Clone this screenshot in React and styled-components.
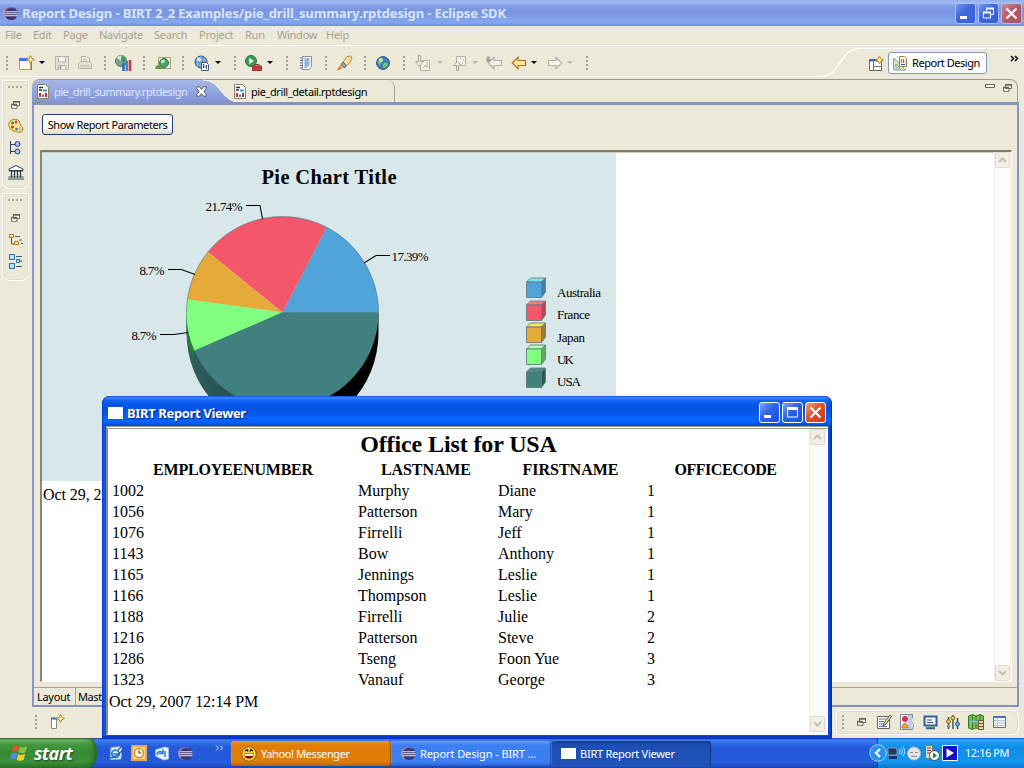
import React from 'react';
import styled, { createGlobalStyle, css } from 'styled-components';

const GlobalStyle = createGlobalStyle`
  * { box-sizing: border-box; }
  body { margin: 0; overflow: hidden; }
  svg { display: block; flex: none; overflow: visible; }
`;

const uiFont = css`
  font-family: 'Noto Sans', 'Liberation Sans', sans-serif;
  font-size: 11px;
  line-height: 14px;
  white-space: nowrap;
`;
const serif = css`
  font-family: 'Liberation Serif', serif;
  white-space: nowrap;
`;

/* ---------- shared parts ---------- */

const Label = styled.span`
  ${uiFont}
  flex: none;
  color: ${p => p.$color || '#000'};
  letter-spacing: ${p => p.$ls || 0}px;
`;

const Desktop = styled.div`
  position: relative;
  width: 1024px;
  height: 768px;
  display: flex;
  flex-direction: column;
  background: #ece9d8;
  overflow: hidden;
`;

const WinButton = styled.div`
  width: 21px;
  height: 21px;
  flex: none;
  border-radius: 3px;
  border: 1px solid ${p => (p.$faded ? '#a9c0f3' : '#fff')};
  background: ${p =>
    p.$close
      ? p.$faded
        ? 'linear-gradient(135deg,#c98a9a,#b05a68 50%,#a9545f)'
        : 'linear-gradient(135deg,#f0a288,#e0532c 45%,#c43a10)'
      : p.$faded
        ? 'linear-gradient(135deg,#6f97ee,#3d66dc 45%,#3a5fd8)'
        : 'linear-gradient(135deg,#7fa3f2,#2f62e4 45%,#1c4fd8)'};
`;

/* ---------- title bar ---------- */

const TitleBar = styled.div`
  height: 26px;
  flex: none;
  display: flex;
  align-items: center;
  padding: 0 2px 0 3px;
  background: linear-gradient(#8fabee 0, #a2bdf4 2px, #86a4ea 5px, #7c96e0 9px, #7b97e2 14px, #82a4ec 20px, #82a6ee 23px, #7288d4 26px);
`;
const TitleText = styled.div`
  font: bold 13px/16px 'Noto Sans', sans-serif;
  white-space: nowrap;
  flex: 1;
  padding-left: ${p => p.$pad}px;
  color: ${p => (p.$faded ? '#d8e4f8' : '#fff')};
  letter-spacing: ${p => p.$ls}px;
  text-shadow: ${p => (p.$faded ? 'none' : '1px 1px 1px #0a1f80')};
`;
const WinButtons = styled.div`
  display: flex;
  gap: 2px;
`;

/* ---------- menu ---------- */

const MenuBar = styled.div`
  height: 20px;
  flex: none;
  display: flex;
  align-items: center;
  padding: 0 0 1px 5px;
  border-bottom: 1px solid #fff;
`;
const MenuItem = styled.div`
  ${uiFont}
  width: ${p => p.$w}px;
  color: #a5a291;
  letter-spacing: -0.25px;
`;

/* ---------- toolbar ---------- */

const Toolbar = styled.div`
  height: 33px;
  flex: none;
  display: flex;
`;
const ToolStrip = styled.div`
  width: 820px;
  height: 31px;
  display: flex;
  align-items: center;
  padding: 3px 0 0 6px;
  border-bottom: 1px solid #fbfaf5;
`;
const Slot = styled.div`
  width: ${p => p.$w}px;
  flex: none;
  display: flex;
  align-items: center;
`;
const Handle = styled.div`
  width: 2px;
  height: 14px;
  background: repeating-linear-gradient(#a19e8e 0 2px, transparent 2px 4px);
`;
const Caret = styled.div`
  border: 3px solid transparent;
  border-top-color: ${p => (p.$off ? '#bcb9aa' : '#000')};
  border-bottom: 0;
`;
const PerspectiveBar = styled.div`
  flex: 1;
  display: flex;
`;
const PerspectiveButtons = styled.div`
  flex: 1;
  display: flex;
  align-items: flex-start;
  border-top: 1px solid #fff;
  height: 30px;
  margin-top: 2px;
  padding: 3px 0 0 9px;
`;
const PerspectiveButton = styled.div`
  width: 99px;
  height: 22px;
  margin-left: 3px;
  margin-right: 23px;
  display: flex;
  align-items: center;
  gap: 4px;
  padding-left: 4px;
  border: 1px solid #8098bd;
  border-radius: 3px;
  background: #fdfdff;
`;
const OpenPerspective = styled.div`
  padding-top: 4px;
`;
const Overflow = styled.div`
  padding-top: 3px;
`;

/* ---------- workbench ---------- */

const Workbench = styled.div`
  height: 628px;
  flex: none;
  display: flex;
`;
const FastViews = styled.div`
  width: 32px;
  flex: none;
  display: flex;
  flex-direction: column;
  gap: 4px;
  padding: 1px 0 0 2px;
`;
const FastViewBar = styled.div`
  width: 27px;
  height: ${p => p.$h}px;
  border: 1px solid #fff;
  border-right-color: #fbfaf5;
  border-radius: 2px 2px 8px 8px;
  box-shadow: 0 0 0 1px #dedac8 inset;
  display: flex;
  flex-direction: column;
  align-items: center;
`;
const FastItem = styled.div`
  height: ${p => p.$h}px;
  flex: none;
  display: flex;
  align-items: center;
`;
const Dots = styled.div`
  width: 15px;
  height: 2px;
  background: repeating-linear-gradient(90deg, #a9a696 0 2px, transparent 2px 4px);
`;
const EditorFolder = styled.div`
  width: 987px;
  flex: none;
  display: flex;
  flex-direction: column;
`;
const TabStrip = styled.div`
  height: 23px;
  width: 986px;
  flex: none;
  display: flex;
  border-top: 1px solid #9c998a;
  border-right: 1px solid #a5a294;
  border-radius: 8px 8px 0 0;
`;
const ActiveTab = styled.div`
  width: 202px;
  height: 23px;
  display: grid;
  & > * { grid-area: 1 / 1; }
`;
const TabContent = styled.div`
  position: relative;
  display: flex;
  align-items: center;
  padding-left: ${p => p.$pad}px;
  gap: 5px;
  height: 23px;
`;
const TabClose = styled.div`
  padding-left: 4px;
`;
const IdleTab = styled.div`
  width: 161px;
  height: 22px;
  border-right: 1px solid #a5a294;
  border-top-right-radius: 8px;
`;
const TabTools = styled.div`
  flex: 1;
  display: flex;
  justify-content: flex-end;
  gap: 8px;
  padding: 4px 5px 0 0;
`;
const EditorBody = styled.div`
  flex: 1;
  border: 2px solid #8695cb;
  border-top: 3px solid #8893c0;
  border-bottom-color: #8490b8;
  display: flex;
  flex-direction: column;
  background: #ece9d8;
`;
const ParamRow = styled.div`
  height: 45px;
  flex: none;
  padding: 9px 0 0 8px;
`;
const PushButton = styled.div`
  width: 131px;
  height: 21px;
  display: flex;
  align-items: center;
  justify-content: center;
  border: 1px solid #1d3f74;
  border-radius: 3px;
  background: linear-gradient(#fff, #f6f5ef 70%, #dcd8ca);
`;
const BrowserFrame = styled.div`
  width: 972px;
  height: 532px;
  margin-left: 6px;
  flex: none;
  display: flex;
  border: 1px solid #8d8a7b;
  border-top: 2px solid #7b796c;
  border-left: 2px solid #8a8779;
  border-right-color: #fff;
  border-bottom-color: #fff;
  background: #fff;
`;
const ReportPage = styled.div`
  flex: 1;
  border-top: 1px solid #cfcdc2;
`;
const ReportDate = styled.div`
  ${serif}
  font-size: 16px;
  line-height: 20px;
  padding: ${p => p.$pad};
  letter-spacing: -0.07px;
`;
const ScrollBar = styled.div`
  width: 17px;
  display: flex;
  flex-direction: column;
  justify-content: space-between;
  background: #fdfdf9;
  border-left: 1px solid #efeee6;
  border-right: 1px solid #f3f1ea;
`;
const ScrollButton = styled.div`
  width: 15px;
  height: 16px;
  display: flex;
  align-items: center;
  justify-content: center;
  border: 1px solid #e0ded4;
  border-radius: 2px;
  background: #f1efe6;
`;
const PageTabs = styled.div`
  height: 18px;
  flex: none;
  margin-top: 5px;
  display: flex;
  border-top: 1px solid #a5a294;
`;
const PageTab = styled.div`
  height: 17px;
  display: flex;
  align-items: center;
  width: ${p => p.$w}px;
  padding-left: ${p => p.$pad}px;
  border-right: 1px solid #a5a294;
`;

/* ---------- status row ---------- */

const StatusRow = styled.div`
  height: 31px;
  flex: none;
  display: flex;
  align-items: center;
  padding: 0 5px 1px 35px;
`;
const NewFastView = styled.div`
  flex: 1;
  padding-left: 14px;
`;
const ViewShelf = styled.div`
  width: 183px;
  height: 25px;
  display: flex;
  align-items: center;
  padding-left: 5px;
  border: 1px solid #fff;
  border-radius: 3px 8px 8px 3px;
  box-shadow: 0 0 0 1px #dedac8 inset;
`;

/* ---------- report viewer window ---------- */

const ViewerWindow = styled.div`
  position: absolute;
  left: 102px;
  top: 396px;
  width: 730px;
  height: 343px;
  display: flex;
  flex-direction: column;
  padding: 0 4px 4px;
  border-radius: 8px 8px 0 0;
  background: linear-gradient(90deg, #0a2fc4 0, #0b5cf2 2px, #0a4fe0 4px, #0a4fe0 726px, #0844d8 728px, #001fa0 730px);
  box-shadow: inset 0 -3px 0 #0a38c4;
`;
const ViewerTitle = styled.div`
  height: 30px;
  flex: none;
  margin: 0 -4px;
  display: flex;
  align-items: center;
  padding: 3px 6px 0 6px;
  border-radius: 8px 8px 0 0;
  box-shadow: inset 2px 0 1px -1px #0a38c4, inset -2px 0 1px -1px #0a2cb0;
  background: linear-gradient(#0c50d8 0, #3a8cff 2px, #1468f4 4px, #0555e6 8px, #0453e2 14px, #0562fa 22px, #0664ff 26px, #0347d0 30px);
`;
const BlankIcon = styled.div`
  width: 15px;
  height: ${p => p.$h || 12}px;
  flex: none;
  background: #fff;
`;
const ViewerBody = styled.div`
  flex: 1;
  display: flex;
  border: 2px solid #8d8a7b;
  border-top: 3px double #a19e90;
  border-right: 1px solid #fff;
  border-bottom: 1px solid #fff;
  background: #fff;
  padding: 0 1px 2px 0;
`;
const ViewerPage = styled.div`
  flex: 1;
`;
const Heading = styled.div`
  ${serif}
  font-size: 24px;
  font-weight: bold;
  line-height: 28px;
  height: 30px;
  padding-top: 1px;
  letter-spacing: -0.12px;
  text-align: center;
`;
const Table = styled.div`
  ${serif}
  font-size: 16px;
  line-height: 21px;
  display: grid;
  grid-template-columns: 246px 140px 149px 161px;
  grid-auto-rows: 21px;
  padding-left: 2px;
`;
const Head = styled.div`
  font-weight: bold;
  text-align: center;
  letter-spacing: ${p => p.$ls}px;
`;
const Cell = styled.div`
  padding-left: 2px;
`;

/* ---------- taskbar ---------- */

const Taskbar = styled.div`
  height: 30px;
  flex: none;
  display: flex;
  background: linear-gradient(#1f3fb0 0, #3f80ee 2px, #3070e8 5px, #2459d8 9px, #245cdc 24px, #1f4fc4 28px, #1840a8 30px);
`;
const StartButton = styled.div`
  width: 97px;
  display: flex;
  align-items: center;
  gap: 5px;
  padding-left: 10px;
  border-radius: 0 8px 10px 0 / 0 12px 14px 0;
  background: linear-gradient(#2a6a2a 0, #6cb86a 2px, #44983f 6px, #378a34 14px, #3a9038 24px, #2a7228 30px);
  box-shadow: inset -4px 0 5px -2px #1f5f22;
`;
const StartText = styled.div`
  font: italic bold 18px/22px 'Open Sans', 'Noto Sans', sans-serif;
  letter-spacing: -0.65px;
  color: #fff;
  text-shadow: 1px 1px 2px #1c4a1c;
`;
const QuickLaunch = styled.div`
  width: 134px;
  display: flex;
  align-items: center;
  padding-left: 11px;
`;
const TaskButton = styled.div`
  width: 160px;
  height: 25px;
  margin: 3px 0 0 0;
  display: flex;
  align-items: center;
  gap: 4px;
  padding-left: 10px;
  border-radius: 3px;
  background: ${p =>
    p.$kind === 'alert'
      ? 'linear-gradient(#f09a3a,#e27d08 4px,#e07b06 21px,#b8640a)'
      : p.$kind === 'pressed'
        ? 'linear-gradient(#143c8c,#1d4eb4 4px,#1e52b8 23px,#2458c4)'
        : 'linear-gradient(#6aa0fa,#3c80f4 4px,#3a7ef2 21px,#2a60d0)'};
  box-shadow: inset 1px 0 1px rgba(255, 255, 255, 0.15), inset -1px 0 1px rgba(0, 0, 0, 0.3);
`;
const Spacer = styled.div`
  flex: 1;
`;
const Tray = styled.div`
  width: 147px;
  display: flex;
  align-items: center;
  border-left: 1px solid #0a3d9c;
  background: linear-gradient(#0c5cc4 0, #2cb0f8 2px, #159cf0 5px, #0f8ce6 10px, #1296ee 24px, #0d78cc 30px);
`;
const TrayArrow = styled.div`
  margin-left: -9px;
`;

/* ---------- icons ---------- */

const I = ({ w = 16, h = 16, children }) => (
  <svg width={w} height={h} viewBox={`0 0 ${w} ${h}`} fill="none">{children}</svg>
);
const Star = ({ x, y }) => (
  <path d={`M${x} ${y - 4}l1.2 2.8 2.8 1.2-2.8 1.2L${x} ${y + 4}l-1.2-2.8L${x - 4} ${y}l2.8-1.2z`} fill="#fff3b8" stroke="#b8861c" strokeWidth="1" />
);
const EclipseIcon = ({ s = 15 }) => (
  <svg width={s} height={s} viewBox="0 0 16 16">
    <circle cx="7" cy="8" r="6.8" fill="#d8a0a0" />
    <circle cx="8.6" cy="8" r="7" fill="#3a3478" />
    <path d="M2 6.2h13.3M1.6 8.3h14M2 10.4h13.3" stroke="#e8e6f6" strokeWidth="1.1" />
    <path d="M4 4c2-3 6-3 8-1" stroke="#8a84c0" fill="none" />
  </svg>
);
const NewIcon = () => (
  <I w={17}><path d="M1.5 4.5h11v10h-11z" fill="#fdfdf4" stroke="#b7a060" /><path d="M1 3h9v3H1z" fill="#3f7fc8" /><path d="M13.5 7v8" stroke="#a88420" /><Star x={12.5} y={4.5} /></I>
);
const SaveIcon = () => (
  <I><path d="M1.500 1.500h13v13h-13z" fill="#e4e1d4" stroke="#b7b4a8" /><path d="M4.500 2v5h7V2M4.500 14.500v-4h7v4" fill="#f4f2ea" stroke="#b7b4a8" /><path d="M6.500 11v3" stroke="#aaa79b" strokeWidth="2" /></I>
);
const PrintIcon = () => (
  <I><path d="M4.500 7.500v-6h5l3 2v4" fill="#f6f4ee" stroke="#b7b4a8" /><path d="M1.500 8.500l2-2h9l2 2v5h-13z" fill="#e4e1d4" stroke="#b7b4a8" /><path d="M6 4h4M6 6h4M3 11h10" stroke="#b7b4a8" /></I>
);
const ChartIcon = () => (
  <I w={17}><circle cx="6" cy="6" r="5.500" fill="#7fa28a" stroke="#58756a" /><path d="M6 6L1.500 2.500A6 6 0 0 1 7 .5z" fill="#cfe4d6" /><path d="M6.500 1a5.500 5.500 0 0 1 4 7L6 6z" fill="#3b9a6a" /><path d="M8.500 8v8" stroke="#2f6fb8" strokeWidth="2.600" /><path d="M11.800 6v10" stroke="#4a7fd0" strokeWidth="2.400" /><path d="M15 5v11" stroke="#c8343c" strokeWidth="2.600" /></I>
);
const ImageIcon = () => (
  <I><path d="M3.500 2.500h12v11h-12z" fill="#f0f4e4" stroke="#a9a26a" /><circle cx="9" cy="8" r="4.500" fill="#4aa070" stroke="#2f6f5c" /><path d="M6 6c2-2 4-1 4 0s-2 3-4 2" fill="#c8e8c0" /><path d="M0 13c1-3 4-4 6-2 2 1 3 1 4 3H1z" fill="#5d9a40" /></I>
);
const Globe = ({ s = 14 }) => (
  <svg width={s} height={s} viewBox="0 0 14 14"><circle cx="7" cy="7" r="6.400" fill="#3f7cba" stroke="#2d5578" /><path d="M3 3c2-2 4-1 4 1S5 6 4.500 8 2 8 1.500 6zM8 7c2-1 4 0 4 1s-2 4-4 4-1-4 0-5z" fill="#7cc070" /><circle cx="5" cy="4" r="1.800" fill="#e8f6ff" opacity=".8" /></svg>
);
const GlobeDocIcon = () => (
  <I><circle cx="7" cy="7" r="6" fill="#5c94c8" stroke="#35597c" /><path d="M2 5h10M2 9h10M7 1v12M4 2c-1 3-1 7 0 10M10 2c1 3 1 7 0 10" stroke="#a8cbe4" strokeWidth=".7" /><circle cx="5" cy="4.500" r="2" fill="#f0faff" opacity=".8" /><path d="M7.500 7.500h5l2 2v6h-7z" fill="#fff" stroke="#4a5a8c" /><path d="M9.500 9v5M12.500 10v4M9 11.500h4" stroke="#304a90" strokeWidth="1.300" strokeDasharray="1.500 1" /></I>
);
const RunIcon = () => (
  <I w={17}><circle cx="6" cy="6" r="5.500" fill="#3a9a54" stroke="#2a7040" /><path d="M4 3l5 3-5 3z" fill="#fff" /><path d="M7.500 11h9v4.500h-9z" fill="#d04040" stroke="#a03030" /><path d="M10 11V9.500h4V11M8 13h8" stroke="#a03030" /></I>
);
const DocIcon = () => (
  <I><path d="M4.500 1.500h9v10l-2 3h-7z" fill="#f4f8ff" stroke="#8a8f9c" /><path d="M6.500 4h5M6.500 6h5M6.500 8h5M6.500 10h5M6.500 12h3" stroke="#3a6ab0" /><path d="M2 3h2M2 5.500h2M2 8h2M2 10.500h2M2 13h2" stroke="#4a7a9c" /></I>
);
const RocketIcon = () => (
  <I><path d="M10 1.500l4-.5 1 3-3 4.500-4 3-3-3z" fill="#f6dca0" stroke="#c08a40" /><path d="M6 7l3.500 3.500-2 2.500L4 9.500z" fill="#9a98a4" stroke="#6a6870" /><path d="M3.500 10.500L.5 15l5-2.500" fill="#f0a040" stroke="#c87820" /></I>
);
const PrevNextIcon = ({ up }) => (
  <I><path d={up ? 'M5.500 1.500h9v9h-9z' : 'M5.500 5.500h9v10h-9z'} fill="#f4f2ea" stroke="#b4b1a5" /><path d={up ? 'M9 3h1M12 5h1M11 8h1' : 'M12 7v6M8 13l3-3'} stroke="#a9a69a" /><path d={up ? 'M5.500 15.500v-5h-3l4-4 4 4h-3v5z' : 'M3.500 .5v6h-3l4 5 4-5h-3v-6z'} fill="#e8e6dc" stroke="#aaa79b" /></I>
);
const ArrowIcon = ({ right, off, star }) => (
  <I w={16}><g transform={right ? 'translate(15.500 0) scale(-1 1)' : star ? 'translate(1.500 0)' : 'translate(.5 0)'}><path d="M.7 8l5.800-5.500V5.500h7.500v5H6.500v3z" fill={off ? '#f4f2ea' : '#ffe9a0'} stroke={off ? '#b4b1a5' : '#b8741c'} strokeWidth="1.200" /></g>{star && <path d="M0 3l4 3M4 2L1 7M2 1v6M0 5h5" stroke="#918f86" />}</I>
);
const PerspectiveIcon = () => (
  <I><path d="M.5 3.500h12v11H.5z" fill="#fff" stroke="#6b7060" /><path d="M0 4.500h9" stroke="#2f62b0" strokeWidth="2" /><path d="M4.500 6v8M5 10.500h7" stroke="#6b7060" /><Star x={10.500} y={4} /></I>
);
const DesignIcon = () => (
  <I w={15}><path d="M.7 3v12h12z" fill="#dbe8d8" stroke="#7c9a84" /><path d="M3 9v4h4z" fill="#fff" stroke="#7c9a84" /><path d="M6.500 1.500h5l2 2v8h-7z" fill="#fff8dc" stroke="#9a8548" /><path d="M8 5h4M8 7h4" stroke="#2a5ca8" strokeDasharray="1.200 .8" strokeWidth="1.400" /><path d="M8 9.500h4" stroke="#2a5ca8" /></I>
);
const ReportFileIcon = () => (
  <I w={12} h={15}><path d="M.5 .5h8l3 3v11H.5z" fill="#fff" stroke="#8a8258" /><path d="M2 3.500h4M2 6h3" stroke="#222c60" strokeWidth="1.500" /><path d="M6 6.500h4" stroke="#28a0c8" strokeWidth="2" /><path d="M3 9v4" stroke="#d02050" strokeWidth="2" /><path d="M6 10.500v2.500" stroke="#2090b0" strokeWidth="2" /><path d="M9 9v4" stroke="#d02050" strokeWidth="2" /></I>
);
const CloseTabIcon = () => (
  <I w={11} h={11}><path d="M.8 .8h2.500l2.200 2.400L7.700 .8h2.500v2L7.700 5.400l2.500 2.800v2H7.700L5.500 7.700 3.300 10.200H.8v-2l2.500-2.800L.8 2.800z" fill="#fff" stroke="#55566a" /></I>
);
const RestoreIcon = () => (
  <I w={9} h={8}><path d="M2.500 1h6v3.500h-6zM.5 3.700h5.500v3.600H.5z" fill="#fff" stroke="#6a685c" /><path d="M2 .8h7M0 3.500h6" stroke="#6a685c" strokeWidth="1.400" /></I>
);
const MinIcon = () => (<I w={10} h={4}><path d="M.5 .5h9v3h-9z" fill="#fff" stroke="#6a685c" /></I>);
const PaletteIcon = () => (
  <I><path d="M1 5c1-4 8-5 10-2s0 4 2 5 3 5 0 6-5-1-7-1-6-3-5-8z" fill="#fbe98c" stroke="#9a8020" /><circle cx="4.500" cy="5" r="1.500" fill="#3a8a40" /><circle cx="8" cy="4" r="1.500" fill="#c83a80" /><circle cx="4.500" cy="9" r="1.500" fill="#d03030" /><circle cx="8.500" cy="11" r="1.300" fill="#4868c0" /><circle cx="12" cy="11" r="1.300" fill="#fff" stroke="#9a8020" strokeWidth=".6" /></I>
);
const TreeIcon = () => (
  <I><path d="M2.500 1v13M2.500 4.500H7M2.500 11.500H7" stroke="#2a4468" /><circle cx="9.500" cy="4" r="2.500" fill="#b4bcf4" stroke="#26427c" /><circle cx="9.500" cy="11.500" r="2.500" fill="#b4bcf4" stroke="#26427c" /></I>
);
const BankIcon = () => (
  <I><path d="M1 5L8 1.500 15 5v1.500H1z" fill="#fff" stroke="#2a4050" /><path d="M3.500 7v6M6.500 7v6M9.500 7v6M12.500 7v6" stroke="#2a4050" strokeWidth="1.200" /><path d="M.5 13h15M0 15h16M1 7h14" stroke="#2a4050" /></I>
);
const OutlineIcon = () => (
  <I><path d="M3.500 6v6H7M7 4.500h5M11 8h3M13 11.500h2" stroke="#3a5a80" /><path d="M1.500 2.500h4v3h-4zM6.500 9.500h4v3h-4z" fill="#fce0a0" stroke="#c07a20" /></I>
);
const PropsIcon = () => (
  <I><path d="M1.500 1.500h5v5h-5zM1.500 10.500h5v5h-5zM8.500 6.500h3v3h-3z" fill="#b8e4f4" stroke="#2a6ca0" /><path d="M8 3.500h6M8 13.500h6M12 8h2" stroke="#2a5c90" /></I>
);
const FastNewIcon = () => (
  <I w={15}><path d="M.5 4.500h5v10h-5z" fill="#fff" stroke="#8a8a80" /><path d="M0 4.500h6" stroke="#2f6fc0" strokeWidth="2" /><Star x={9.500} y={4.500} /></I>
);
const EditIcon = () => (
  <I><path d="M1.500 2.500h12v12h-12z" fill="#fff" stroke="#6a6858" /><path d="M3 5h7M3 7.500h5M3 10h4M3 12.500h8" stroke="#4a78b0" /><path d="M7 12l1-3 6-8 1.500 1.500L10 10z" fill="#f4dfa0" stroke="#5a5848" /></I>
);
const FaceDocIcon = () => (
  <I><path d="M1.500 .5h12v3l-2 3 3 4-1 5h-12z" fill="#f4f6fc" stroke="#7c88a8" /><path d="M9 1h4v14H9z" fill="#bccdee" /><circle cx="6" cy="5" r="3" fill="#e03050" /><path d="M3 14c0-6 6-6 6 0z" fill="#f0a830" stroke="#b87818" /></I>
);
const MonitorIcon = () => (
  <I><path d="M1.500 2.500h12v9h-12z" fill="#fff" stroke="#2f5c9c" strokeWidth="2" /><path d="M4 6h5M4 8.500h6" stroke="#2a4c80" /><path d="M3 14.200h9" stroke="#2f5c9c" strokeWidth="2" /></I>
);
const SlidersIcon = () => (
  <I><path d="M2.500 3v12M7 1v14M11.500 4v11" stroke="#2a4c70" strokeWidth="1.400" /><circle cx="2.500" cy="7.500" r="2" fill="#f0c040" stroke="#8a6820" /><circle cx="7" cy="4" r="2" fill="#f0c040" stroke="#8a6820" /><circle cx="11.500" cy="10" r="2" fill="#70b8e8" stroke="#2a5c90" /><circle cx="2.500" cy="12" r="1.600" fill="#60a060" /></I>
);
const MapIcon = () => (
  <I><path d="M.5 2l4-1.500L8 2l4-1.500L15.500 2v12L12 15.500 8 14l-4 1.500L.5 14z" fill="#7cc04c" stroke="#3a7424" /><path d="M4.500 1v14M8 2v12M12 1v14" stroke="#3f7c34" /><path d="M2 8c4-3 8 3 12-1" stroke="#70c8e8" strokeWidth="1.600" /><path d="M10.500 6.500h5v9h-5z" fill="#e8d8a8" stroke="#6a5838" /><path d="M11 9.500h4M11 12.500h4" stroke="#6a5838" /></I>
);
const TableIcon = () => (
  <I w={13} h={12}><path d="M.5 .5h12v11H.5z" fill="#f8fbff" stroke="#5c7294" /><path d="M0 1h13" stroke="#4a74b0" strokeWidth="2" /><path d="M1 4.500h11M1 7h11M1 9.500h11M4.500 2v9" stroke="#b4c4da" /></I>
);
const FlagIcon = () => (
  <svg width="19" height="18" viewBox="0 0 19 18"><path d="M3 3c2-2 4-2 6-.8L7.500 8.200C5.500 7 4 7 1.500 8.500z" fill="#e8542c" /><path d="M10 2.500c2 1.200 4 1.200 7-.2l-1.500 6c-2.500 1.400-5 1.200-7 0z" fill="#86c440" /><path d="M1.200 9.800C3.500 8.500 5.500 8.500 7.200 9.500L5.700 15.500c-2-1.200-4-1-6 .2z" fill="#4a8cf0" /><path d="M8.200 10c2 1.200 4.500 1.200 7-.2l-1.500 6c-2.500 1.400-5 1.200-7 0z" fill="#f8cc30" /></svg>
);
const IEIcon = () => (
  <I><path d="M3 2.500l10.500-1L13 14l-10.500.5z" fill="#eef6ff" stroke="#8ab4e8" /><circle cx="7.500" cy="8.800" r="3.700" stroke="#2a7cd0" strokeWidth="1.800" fill="#eaf6ff" /><path d="M4.500 9h6.500" stroke="#2a7cd0" strokeWidth="1.500" /><path d="M10 5l4-4M2 13c3 0 9-4 13-8" stroke="#1f5cac" strokeWidth="1.200" /></I>
);
const ClockIcon = () => (
  <I><path d="M1 1h14v14H1z" fill="#fbd88c" stroke="#f0a84c" strokeWidth="2" /><circle cx="8" cy="8" r="4.600" fill="#fff8e4" stroke="#c88434" strokeWidth="1.300" /><path d="M8 5v3h2.500" stroke="#8a4c10" strokeWidth="1.200" /></I>
);
const DesktopIcon = () => (
  <I><path d="M1.500 5l9-3 4 1v11l-5 1-8-4z" fill="#eef6ff" stroke="#9cc0f0" /><path d="M3 10c0-3 3-5 6-2M9 4v4.500H5M11 12V6" stroke="#2a7cd8" strokeWidth="1.500" /></I>
);
const SmileyIcon = () => (
  <I><circle cx="8" cy="8" r="7.300" fill="#fbd428" stroke="#8a5a10" /><path d="M3 7.500h10c0 7-10 7-10 0z" fill="#8a1414" /><path d="M3.500 8h9v1.800h-9z" fill="#fff" /><path d="M4 5l2-1.500L7 5.500M9 5.500l1-2L12 5" stroke="#1c1c1c" strokeWidth="1.400" /></I>
);
const TrayArrowIcon = () => (
  <I w={18} h={18}><circle cx="9" cy="9" r="8.300" fill="#2a90e8" stroke="#9ad0fa" /><path d="M11 5L7 9l4 4" stroke="#fff" strokeWidth="2.200" /></I>
);
const NetIcon = () => (
  <I w={17}><path d="M1 3h9v7H1z" fill="#24345c" stroke="#8c9cc0" /><path d="M2 12.500h8" stroke="#182444" strokeWidth="2.600" /><path d="M12 4c1 2 1 3 0 5M14 3c1.500 2 1.500 5 0 7M16 1.500c2 3 2 7 0 10" stroke="#cfe6fc" strokeWidth=".9" /></I>
);
const GreyFaceIcon = () => (
  <I w={15} h={15}><circle cx="7" cy="7.500" r="6.500" fill="#e4e8ea" stroke="#b4bec8" /><path d="M3 6.500h3M8 6.500h3M4 10c2 .6 4 .6 6 0" stroke="#808c94" strokeWidth="1.200" /></I>
);
const ServerIcon = () => (
  <I><path d="M1.500 .5h7v13h-7z" fill="#e0dccc" stroke="#78766c" /><path d="M3 3h4M3 5.500h4M3 8h4" stroke="#8c4030" /><circle cx="10.500" cy="10.500" r="5" fill="#fff" stroke="#3c4c3c" /><path d="M9 7.500l4 3-4 3z" fill="#1c8c28" /></I>
);
const PlayIcon = () => (
  <I><path d="M.5 .5h15v15H.5z" fill="#1010c8" stroke="#fff" /><path d="M4.500 3.500L12 8l-7.500 4.500z" fill="#fff" /></I>
);
const Glyph = ({ kind }) => (
  <svg width="19" height="19" viewBox="0 0 19 19" fill="none" stroke="#fff">
    {kind === 'min' && <path d="M4 13.500h7" strokeWidth="3" />}
    {kind === 'max' && <><path d="M4.500 4.500h10v9.500h-10z" /><path d="M4 5.500h11" strokeWidth="3" /></>}
    {kind === 'restore' && <><path d="M7.500 7V4.500h7v6H12" /><path d="M7 4.500h8M4 8.500h8" strokeWidth="2" /><path d="M4.500 8.500h7v5.500h-7z" /></>}
    {kind === 'close' && <path d="M4.500 4.500l10 10M14.500 4.500l-10 10" strokeWidth="2.200" />}
  </svg>
);
const Chevron = ({ down }) => (
  <svg width="9" height="6" viewBox="0 0 9 6" fill="none"><path d={down ? 'M1 1l3.500 3.500L8 1' : 'M1 5l3.500-3.500L8 5'} stroke="#c2c0b4" strokeWidth="2" /></svg>
);

/* ---------- chart ---------- */

const CX = 240.5, CY = 159.5, R = 96;
const pt = deg => [CX + R * Math.cos((deg * Math.PI) / 180), CY - R * Math.sin((deg * Math.PI) / 180)];
const slice = (a, b) => {
  const [x1, y1] = pt(a), [x2, y2] = pt(b);
  return `M${CX} ${CY}L${x1} ${y1}A${R} ${R} 0 ${b - a > 180 ? 1 : 0} 0 ${x2} ${y2}Z`;
};
const slices = [
  { from: 0, to: 62.6, fill: '#4fa5da' },
  { from: 62.6, to: 140.9, fill: '#f35769' },
  { from: 140.9, to: 172.2, fill: '#e5aa3a' },
  { from: 172.2, to: 203.5, fill: '#80ff80' },
  { from: 203.5, to: 360, fill: '#40807f' },
];
const legend = [
  { name: 'Australia', y: 125, base: 143.5, w: 44, front: '#4fa5da', top: '#7de8fb', side: '#3c80ab' },
  { name: 'France', y: 148, base: 165.5, w: 33, front: '#f35769', top: '#f47a8c', side: '#b04858' },
  { name: 'Japan', y: 170, base: 188.5, w: 28, front: '#e5aa3a', top: '#fdea5c', side: '#9c7c38' },
  { name: 'UK', y: 192, base: 210.5, w: 17, front: '#80ff80', top: '#b4ffac', side: '#60a868' },
  { name: 'USA', y: 215, base: 233, w: 24, front: '#40807f', top: '#488c8c', side: '#2c5454' },
];
const callouts = [
  { text: '21.74%', x: 163.5, y: 58, w: 37, line: 'M204 52.500h14l2.500 13.500' },
  { text: '17.39%', x: 349.5, y: 108, w: 37, line: 'M322 110l12-7.500h14' },
  { text: '8.7%', x: 97.5, y: 122, w: 25, line: 'M126 116.500h13.500l13.500 5' },
  { text: '8.7%', x: 89.5, y: 187, w: 25, line: 'M118 181.500h14l14-2' },
];
const ChartSvg = styled.svg`
  font-family: 'Liberation Serif', serif;
  font-size: 13px;
  background: #d8e8ea;
`;

const PieChart = () => (
  <ChartSvg width="574" height="328" viewBox="0 0 574 328">
    <defs>
      <linearGradient id="wall" x1="0" x2="1">
        <stop offset="0" stopColor="#2f5f5e" />
        <stop offset="0.3" stopColor="#254c4c" />
        <stop offset="0.6" stopColor="#000" />
        <stop offset="1" stopColor="#000" />
      </linearGradient>
    </defs>
    <text x="219.500" y="31" fontSize="20.500" fontWeight="bold" textLength="135">Pie Chart Title</text>
    <path d={`M${CX - R} ${CY}v20a${R} ${R + 4} 0 0 0 ${2 * R} 0v-20z`} fill="url(#wall)" />
    <path d={`M${CX - R} ${CY}v20q1 13 7.500 28v-13z`} fill="#2c7a34" />
    {slices.map(s => <path key={s.from} d={slice(s.from, s.to)} fill={s.fill} />)}
    <path d={`M${CX - R} ${CY}a${R} ${R} 0 0 1 ${2 * R} 0`} fill="none" stroke="#4a6a80" strokeWidth="0.600" />
    {callouts.map(c => (
      <g key={c.y}>
        <path d={c.line} fill="none" stroke="#000" strokeWidth="1.100" />
        <text x={c.x} y={c.y} textLength={c.w}>{c.text}</text>
      </g>
    ))}
    {legend.map(l => (
      <g key={l.name} stroke="#667c80" strokeWidth="0.900">
        <path d={`M484.500 ${l.y + 4}l4-4h15l-4 4z`} fill={l.top} />
        <path d={`M499.500 ${l.y + 4}l4-4v14l-4 5.500z`} fill={l.side} />
        <path d={`M484.500 ${l.y + 4}h15v15.500h-15z`} fill={l.front} />
        <text x="515" y={l.base} textLength={l.w} stroke="none">{l.name}</text>
      </g>
    ))}
  </ChartSvg>
);

/* ---------- data ---------- */

const menu = [['File', 28], ['Edit', 30], ['Page', 36], ['Navigate', 55], ['Search', 45], ['Project', 46], ['Run', 32], ['Window', 49], ['Help', 30]];

const H = <Handle />, C = <Caret />, CO = <Caret $off />;
const tools = [
  [H, 12], [<NewIcon />, 21], [C, 15], [<SaveIcon />, 23], [<PrintIcon />, 27], [H, 11], [<ChartIcon />, 28],
  [H, 12], [<ImageIcon />, 27], [H, 12], [<GlobeDocIcon />, 21], [C, 19], [H, 11], [<RunIcon />, 22], [C, 19],
  [H, 12], [<DocIcon />, 27], [H, 12], [<RocketIcon />, 27], [H, 12], [<Globe />, 27], [H, 12],
  [<PrevNextIcon />, 22], [CO, 14], [<PrevNextIcon up />, 21], [CO, 14], [<ArrowIcon off star />, 25],
  [<ArrowIcon />, 20], [C, 16], [<ArrowIcon right off />, 20], [CO, 19], [H, 3],
];

const rows = [
  ['1002', 'Murphy', 'Diane', '1'], ['1056', 'Patterson', 'Mary', '1'], ['1076', 'Firrelli', 'Jeff', '1'],
  ['1143', 'Bow', 'Anthony', '1'], ['1165', 'Jennings', 'Leslie', '1'], ['1166', 'Thompson', 'Leslie', '1'],
  ['1188', 'Firrelli', 'Julie', '2'], ['1216', 'Patterson', 'Steve', '2'], ['1286', 'Tseng', 'Foon Yue', '3'],
  ['1323', 'Vanauf', 'George', '3'],
];

const Scroll = () => (
  <ScrollBar>
    <ScrollButton><Chevron /></ScrollButton>
    <ScrollButton><Chevron down /></ScrollButton>
  </ScrollBar>
);

const Viewer = () => (
  <ViewerWindow>
    <ViewerTitle>
      <BlankIcon />
      <TitleText $pad={4} $ls={-0.35}>BIRT Report Viewer</TitleText>
      <WinButtons>
        <WinButton><Glyph kind="min" /></WinButton>
        <WinButton><Glyph kind="max" /></WinButton>
        <WinButton $close><Glyph kind="close" /></WinButton>
      </WinButtons>
    </ViewerTitle>
    <ViewerBody>
      <ViewerPage>
        <Heading>Office List for USA</Heading>
        <Table>
          <Head $ls={-0.2}>EMPLOYEENUMBER</Head><Head $ls={-0.1}>LASTNAME</Head><Head>FIRSTNAME</Head><Head $ls={-0.45}>OFFICECODE</Head>
          {rows.map(r => r.map((c, i) => <Cell key={r[0] + i}>{c}</Cell>))}
        </Table>
        <ReportDate $pad="2px 0 0 1px">Oct 29, 2007 12:14 PM</ReportDate>
      </ViewerPage>
      <Scroll />
    </ViewerBody>
  </ViewerWindow>
);

export default function App() {
  return (
    <Desktop>
      <GlobalStyle />
      <TitleBar>
        <EclipseIcon />
        <TitleText $faded $pad={4} $ls={-0.13}>Report Design - BIRT 2_2 Examples/pie_drill_summary.rptdesign - Eclipse SDK</TitleText>
        <WinButtons>
          <WinButton $faded><Glyph kind="min" /></WinButton>
          <WinButton $faded><Glyph kind="restore" /></WinButton>
          <WinButton $faded $close><Glyph kind="close" /></WinButton>
        </WinButtons>
      </TitleBar>

      <MenuBar>{menu.map(([t, w]) => <MenuItem key={t} $w={w}>{t}</MenuItem>)}</MenuBar>

      <Toolbar>
        <ToolStrip>{tools.map(([el, w], i) => <Slot key={i} $w={w}>{el}</Slot>)}</ToolStrip>
        <PerspectiveBar>
          <svg width="40" height="33" viewBox="0 0 40 33" fill="none"><path d="M0 30.500C22 31 18 2.500 40 2.500" stroke="#fff" strokeWidth="1.300" /></svg>
          <PerspectiveButtons>
            <OpenPerspective><PerspectiveIcon /></OpenPerspective>
            <PerspectiveButton><DesignIcon /><Label $ls={-0.45}>Report Design</Label></PerspectiveButton>
            <Overflow>
              <svg width="9" height="7" viewBox="0 0 9 7" fill="none"><path d="M1 1l2.500 2.500L1 6M5 1l2.500 2.500L5 6" stroke="#000" strokeWidth="1.500" /></svg>
            </Overflow>
          </PerspectiveButtons>
        </PerspectiveBar>
      </Toolbar>

      <Workbench>
        <FastViews>
          <FastViewBar $h={109}>
            <FastItem $h={11}><Dots /></FastItem>
            <FastItem $h={25}><RestoreIcon /></FastItem>
            <FastItem $h={18}><PaletteIcon /></FastItem>
            <FastItem $h={26}><TreeIcon /></FastItem>
            <FastItem $h={21}><BankIcon /></FastItem>
          </FastViewBar>
          <FastViewBar $h={88}>
            <FastItem $h={11}><Dots /></FastItem>
            <FastItem $h={25}><RestoreIcon /></FastItem>
            <FastItem $h={20}><OutlineIcon /></FastItem>
            <FastItem $h={22}><PropsIcon /></FastItem>
          </FastViewBar>
        </FastViews>

        <EditorFolder>
          <TabStrip>
            <ActiveTab>
              <svg width="205" height="23" viewBox="0 0 205 23">
                <defs><linearGradient id="tab" x2="0" y2="1"><stop stopColor="#a3b7e8" /><stop offset="1" stopColor="#8094d8" /></linearGradient></defs>
                <path d="M0 23V7q1-7 8-7h162c19 0 18 22 38 22.500V23z" fill="url(#tab)" />
                <path d="M171 0c19 0 18 22 38 22.500" stroke="#fff" fill="none" opacity=".7" />
              </svg>
              <TabContent $pad={5}>
                <ReportFileIcon /><Label $color="#dbe5fa" $ls={-0.5}>pie_drill_summary.rptdesign</Label><TabClose><CloseTabIcon /></TabClose>
              </TabContent>
            </ActiveTab>
            <IdleTab><TabContent $pad={0}><ReportFileIcon /><Label $ls={-0.42}>pie_drill_detail.rptdesign</Label></TabContent></IdleTab>
            <TabTools><MinIcon /><RestoreIcon /></TabTools>
          </TabStrip>
          <EditorBody>
            <ParamRow><PushButton><Label $ls={-0.4}>Show Report Parameters</Label></PushButton></ParamRow>
            <BrowserFrame>
              <ReportPage>
                <PieChart />
                <ReportDate $pad="4px 0 0 1px">Oct 29, 2</ReportDate>
              </ReportPage>
              <Scroll />
            </BrowserFrame>
            <PageTabs>
              <PageTab $w={42} $pad={3}><Label $ls={-0.3}>Layout</Label></PageTab>
              <PageTab $w={80} $pad={2}><Label $ls={-0.4}>Mast</Label></PageTab>
            </PageTabs>
          </EditorBody>
        </EditorFolder>
      </Workbench>

      <StatusRow>
        <Handle />
        <NewFastView><FastNewIcon /></NewFastView>
        <ViewShelf>
          <Slot $w={15}><Handle /></Slot>
          <Slot $w={19}><RestoreIcon /></Slot>
          <Slot $w={23}><EditIcon /></Slot>
          <Slot $w={24}><FaceDocIcon /></Slot>
          <Slot $w={23}><MonitorIcon /></Slot>
          <Slot $w={22}><SlidersIcon /></Slot>
          <Slot $w={25}><MapIcon /></Slot>
          <Slot $w={16}><TableIcon /></Slot>
        </ViewShelf>
      </StatusRow>

      <Taskbar>
        <StartButton><FlagIcon /><StartText>start</StartText></StartButton>
        <QuickLaunch>
          <Slot $w={23}><IEIcon /></Slot>
          <Slot $w={23}><ClockIcon /></Slot>
          <Slot $w={24}><DesktopIcon /></Slot>
          <Slot $w={37}><EclipseIcon /></Slot>
          <svg width="8" height="6" viewBox="0 0 8 6" fill="none" transform="translate(0 -5)"><path d="M1 .5l2.500 2.500L1 5.500M5 .5l2.500 2.500L5 5.500" stroke="#cfe0ff" /></svg>
        </QuickLaunch>
        <TaskButton $kind="alert"><SmileyIcon /><Label $color="#fff" $ls={-0.4}>Yahoo! Messenger</Label></TaskButton>
        <TaskButton><EclipseIcon /><Label $color="#fff" $ls={-0.1}>Report Design - BIRT ...</Label></TaskButton>
        <TaskButton $kind="pressed"><BlankIcon $h={11} /><Label $color="#fff" $ls={-0.25}>BIRT Report Viewer</Label></TaskButton>
        <Spacer />
        <Tray>
          <TrayArrow><TrayArrowIcon /></TrayArrow>
          <Slot $w={20}><NetIcon /></Slot>
          <Slot $w={17}><GreyFaceIcon /></Slot>
          <Slot $w={18}><ServerIcon /></Slot>
          <Slot $w={23}><PlayIcon /></Slot>
          <Label $color="#fff" $ls={-0.45}>12:16 PM</Label>
        </Tray>
      </Taskbar>

      <Viewer />
    </Desktop>
  );
}
